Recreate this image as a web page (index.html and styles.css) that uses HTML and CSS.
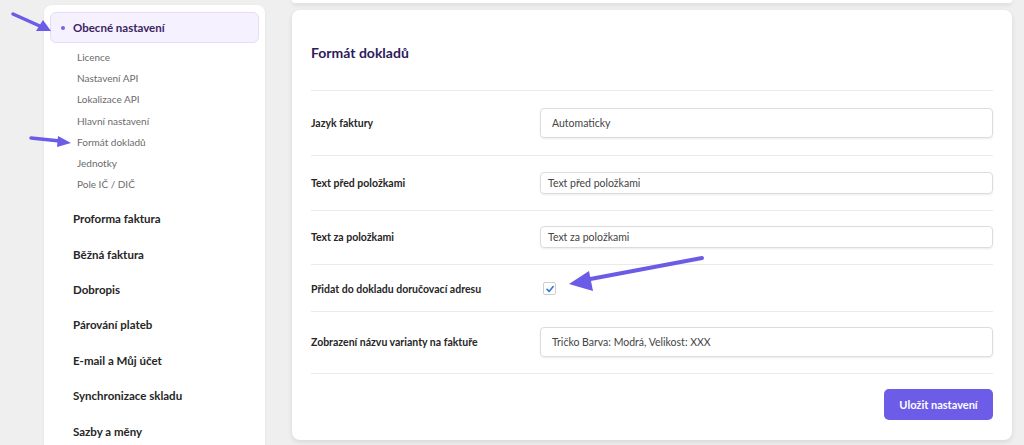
FILE: index.html
```html
<!DOCTYPE html>
<html lang="cs">
<head>
  <meta charset="UTF-8" />
  <meta name="viewport" content="width=device-width, initial-scale=1.0"/>
  <title>Formát dokladů</title>
  <link rel="stylesheet" href="styles.css">
</head>
<body>

<div class="page">
  <aside class="sidebar">
    <div class="nav-active"><span class="dot"></span>Obecné nastavení</div>
    <ul class="subnav">
      <li>Licence</li>
      <li>Nastavení API</li>
      <li>Lokalizace API</li>
      <li>Hlavní nastavení</li>
      <li>Formát dokladů</li>
      <li>Jednotky</li>
      <li>Pole IČ / DIČ</li>
    </ul>
    <ul class="mainnav">
      <li>Proforma faktura</li>
      <li>Běžná faktura</li>
      <li>Dobropis</li>
      <li>Párování plateb</li>
      <li>E-mail a Můj účet</li>
      <li>Synchronizace skladu</li>
      <li>Sazby a měny</li>
    </ul>
  </aside>

  <main class="content">
    <div class="card-prev"></div>
    <section class="card">
      <h2 class="card-title">Formát dokladů</h2>

      <div class="row row-first">
        <label>Jazyk faktury</label>
        <div class="input wide-pad">Automaticky</div>
      </div>
      <div class="row">
        <label>Text před položkami</label>
        <div class="input small">Text před položkami</div>
      </div>
      <div class="row row-tight">
        <label>Text za položkami</label>
        <div class="input small">Text za položkami</div>
      </div>
      <div class="row row-check">
        <label>Přidat do dokladu doručovací adresu</label>
        <div><span class="checkbox"><svg viewBox="0 0 12 12" width="12" height="12"><path d="M3 6.3 L5.1 8.4 L9.2 3.6" fill="none" stroke="#2b78d0" stroke-width="1.6" stroke-linecap="round" stroke-linejoin="round"/></svg></span></div>
      </div>
      <div class="row row-tight">
        <label>Zobrazení názvu varianty na faktuře</label>
        <div class="input wide-pad">Tričko Barva: Modrá, Velikost: XXX</div>
      </div>

      <div class="card-footer">
        <button class="btn">Uložit nastavení</button>
      </div>
    </section>
  </main>
</div>

<!-- annotation arrows -->
<svg class="arrows" width="1024" height="445" viewBox="0 0 1024 445">
  <g fill="#6b5ce8" stroke="#6b5ce8" stroke-linecap="round">
    <line x1="13" y1="14" x2="42" y2="27" stroke-width="3.5"/>
    <polygon points="51,31 36,31 43,20" stroke="none"/>
    <line x1="31" y1="138" x2="60" y2="141" stroke-width="3.5"/>
    <polygon points="71,143 57,147 58,136" stroke="none"/>
    <line x1="702" y1="258" x2="585" y2="280" stroke-width="4"/>
    <polygon points="569,284 589,271 593,291" stroke="none"/>
  </g>
</svg>

</body>
</html>
```

FILE: styles.css
```css
* {
  box-sizing: border-box;
}

body {
  margin: 0;
  padding: 0;
  background: #efefef;
  font-family: Lato, 'Noto Sans', sans-serif;
  overflow: hidden;
  height: 445px;
}

.page {
  display: flex;
  padding-left: 44px;
  gap: 27px;
}

.sidebar {
  width: 221px;
  margin-top: 5px;
  height: 460px;
  background: #fff;
  border-radius: 8px;
  padding: 7px 6px 0;
  box-shadow: 0 1px 3px rgba(0, 0, 0, 0.06);
}

.nav-active {
  display: flex;
  align-items: center;
  height: 31px;
  background: #f6f1fe;
  border: 1px solid #e6dcf6;
  border-radius: 6px;
  padding-left: 10px;
  font-size: 11.5px;
  font-weight: 700;
  color: #3a2563;
}

.dot {
  width: 4px;
  height: 4px;
  border-radius: 50%;
  background: #7a62e2;
  margin-right: 8px;
}

ul {
  list-style: none;
  margin: 0;
  padding: 0;
}

.subnav {
  margin-top: 4px;
  padding-left: 27px;
}

.subnav li {
  height: 21.2px;
  line-height: 21.2px;
  font-size: 10px;
  color: #6b6b6b;
}

.mainnav {
  margin-top: 6px;
  padding-left: 23px;
}

.mainnav li {
  height: 35.4px;
  line-height: 35.4px;
  font-size: 11.5px;
  font-weight: 700;
  color: #262626;
}

.content {
  width: 720px;
}

.card-prev {
  height: 3px;
  background: #fff;
  border-radius: 0 0 8px 8px;
  box-shadow: 0 2px 4px rgba(0, 0, 0, 0.1);
}

.card {
  margin-top: 7px;
  background: #fff;
  border-radius: 8px;
  padding: 0 19px 20px;
  box-shadow: 0 2px 5px rgba(0, 0, 0, 0.1);
}

.card-title {
  margin: 0;
  padding: 33px 0 27px;
  line-height: 20px;
  font-size: 14px;
  font-weight: 700;
  color: #2d1a5c;
}

.row {
  display: grid;
  grid-template-columns: 229px 1fr;
  align-items: center;
  border-top: 1px solid #ebebeb;
  padding: 16px 0;
}

.row-first {
  padding: 17px 0;
}

.row-tight {
  padding: 15px 0 16px;
}

.row label {
  font-size: 10.5px;
  font-weight: 700;
  color: #262626;
}

.input {
  border: 1px solid #dcdcdc;
  border-radius: 4px;
  box-shadow: 0 1px 2px rgba(0, 0, 0, 0.08);
  font-size: 10.5px;
  color: #444;
  display: flex;
  align-items: center;
}

.input.small {
  height: 22px;
  padding-left: 7px;
}

.input.wide-pad {
  height: 30px;
  padding-left: 11px;
  padding-bottom: 1px;
}

.row-check {
  padding: 17px 0 16px;
}

.checkbox {
  display: block;
  width: 13px;
  height: 13px;
  margin-left: 3px;
  border: 1px solid #cfcfcf;
  border-radius: 2px;
  background: #fff;
}

.checkbox svg {
  display: block;
  margin: -0.5px 0 0 -0.5px;
}

.card-footer {
  border-top: 1px solid #ebebeb;
  padding-top: 15px;
  display: flex;
  justify-content: flex-end;
}

.btn {
  width: 109px;
  height: 31px;
  border: none;
  border-radius: 5px;
  background: #6c5ce7;
  color: #fff;
  font-family: inherit;
  font-size: 11px;
  font-weight: 700;
  cursor: pointer;
}

.arrows {
  position: absolute;
  top: 0;
  left: 0;
  pointer-events: none;
}
```
